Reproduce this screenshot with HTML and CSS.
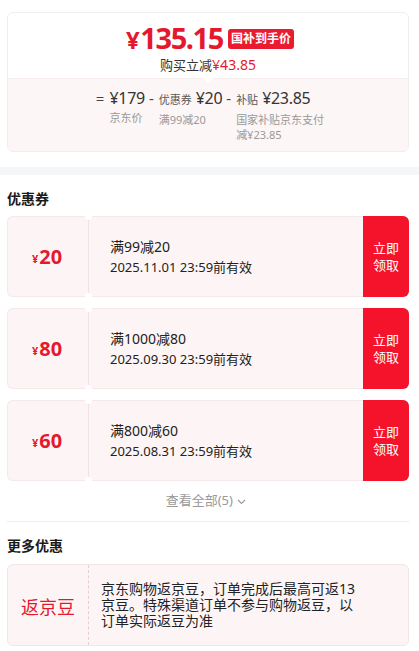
FILE: index.html
```html
<!DOCTYPE html>
<html lang="zh-CN">

<head>
    <meta charset="UTF-8">
    <meta name="viewport" content="width=device-width, initial-scale=1.0">
    <title>优惠详情</title>
    <link rel="stylesheet" href="styles.css">
</head>

<body>
    <div class="wrap">
        <div class="summary">
            <div class="summary-top">
                <div class="price-row">
                    <span class="price"><span class="yen">¥</span>135.15</span>
                    <span class="badge">国补到手价</span>
                </div>
                <div class="save">购买立减<span class="save-num">¥43.85</span></div>
            </div>
            <div class="summary-bottom">
                <span class="op">=</span>
                <div class="part">
                    <div class="part-main">¥179</div>
                    <div class="part-note">京东价</div>
                </div>
                <span class="op">-</span>
                <div class="part">
                    <div class="part-main"><span class="part-label">优惠券</span>¥20</div>
                    <div class="part-note">满99减20</div>
                </div>
                <span class="op">-</span>
                <div class="part part-wide">
                    <div class="part-main"><span class="part-label">补贴</span>¥23.85</div>
                    <div class="part-note">国家补贴京东支付减¥23.85</div>
                </div>
            </div>
        </div>
    </div>

    <div class="band"></div>

    <div class="wrap">
        <h3 class="title">优惠券</h3>

        <div class="coupon">
            <div class="coupon-value"><span class="coupon-yen">¥</span>20</div>
            <div class="coupon-info">
                <div class="coupon-rule">满99减20</div>
                <div class="coupon-date">2025.11.01 23:59前有效</div>
            </div>
            <div class="coupon-btn">立即<br>领取</div>
        </div>

        <div class="coupon">
            <div class="coupon-value"><span class="coupon-yen">¥</span>80</div>
            <div class="coupon-info">
                <div class="coupon-rule">满1000减80</div>
                <div class="coupon-date">2025.09.30 23:59前有效</div>
            </div>
            <div class="coupon-btn">立即<br>领取</div>
        </div>

        <div class="coupon">
            <div class="coupon-value"><span class="coupon-yen">¥</span>60</div>
            <div class="coupon-info">
                <div class="coupon-rule">满800减60</div>
                <div class="coupon-date">2025.08.31 23:59前有效</div>
            </div>
            <div class="coupon-btn">立即<br>领取</div>
        </div>

        <div class="more">
            查看全部(5)
            <svg width="9" height="6" viewBox="0 0 9 6" fill="none" stroke="#999" stroke-width="1.1">
                <path d="M1 1L4.5 4.5L8 1" />
            </svg>
        </div>

        <div class="divider"></div>

        <h3 class="title title-more">更多优惠</h3>

        <div class="bean">
            <div class="bean-name">返京豆</div>
            <div class="bean-text">京东购物返京豆，订单完成后最高可返13京豆。特殊渠道订单不参与购物返豆，以订单实际返豆为准</div>
        </div>
    </div>
</body>

</html>
```

FILE: styles.css
```css
body {
    margin: 0;
    padding: 0;
    background: #fff;
    color: #222;
    font-family: "Noto Sans", "Noto Sans CJK SC", sans-serif;
}

.wrap {
    padding: 0 10px 0 7px;
}

/* top price card */
.summary {
    margin-top: 12px;
    border: 1px solid #eee;
    border-radius: 6px;
    overflow: hidden;
}

.summary-top {
    height: 65px;
    display: flex;
    flex-direction: column;
    align-items: center;
    position: relative;
}

.summary-top::after {
    content: "";
    position: absolute;
    left: 50%;
    bottom: -5px;
    margin-left: -5px;
    border: 5px solid transparent;
    border-top-color: #fff;
    border-bottom: 0;
    z-index: 1;
}

.price-row {
    display: flex;
    align-items: center;
    margin-top: 9px;
    height: 34px;
    padding-left: 4px;
}

.price {
    color: #e5192e;
    font-size: 29px;
    font-weight: 700;
    letter-spacing: -1.4px;
    line-height: 34px;
}

.price .yen {
    font-size: 24px;
    margin-right: 2px;
}

.badge {
    margin-left: 5px;
    background: #ea1a2f;
    color: #fff;
    font-size: 12px;
    font-weight: 700;
    line-height: 20px;
    padding: 0 3px;
    border-radius: 3px;
}

.save {
    font-size: 13px;
    line-height: 18px;
    color: #333;
}

.save-num {
    color: #e5192e;
    font-size: 14px;
}

.summary-bottom {
    background: #fdf6f6;
    border-top: 1px solid #f6eded;
    height: 73px;
    box-sizing: border-box;
    padding-top: 8px;
    display: flex;
    justify-content: center;
    align-items: flex-start;
}

.op {
    font-size: 15px;
    line-height: 22px;
    color: #444;
    margin: 0 5px 0 4px;
}

.part-main {
    font-size: 16px;
    line-height: 22px;
    color: #333;
    white-space: nowrap;
    letter-spacing: -0.3px;
}

.part-label {
    font-size: 11px;
    color: #555;
    margin-right: 4px;
    letter-spacing: 0;
}

.part-note {
    font-size: 11px;
    line-height: 15px;
    color: #999;
    margin-top: 1px;
}

.part-wide {
    width: 88px;
}

.band {
    height: 8px;
    margin-top: 15px;
    background: #f5f6f8;
}

/* coupons */
.title {
    margin: 0;
    padding-top: 14px;
    font-size: 14px;
    line-height: 20px;
    font-weight: 700;
    color: #1a1a1a;
}

.coupon {
    margin-top: 7px;
    height: 81px;
    display: flex;
    background: #fdf5f5;
    border: 1px solid #f4e8e8;
    border-right: 0;
    border-radius: 6px;
    box-sizing: border-box;
}

.coupon + .coupon {
    margin-top: 11px;
}

.coupon-value {
    width: 81px;
    flex: none;
    border-right: 1px solid #f1e3e3;
    position: relative;
    display: flex;
    align-items: center;
    justify-content: center;
    color: #e5192e;
    font-size: 20px;
    font-weight: 700;
    padding-right: 2px;
    box-sizing: border-box;
}

.coupon-value::before,
.coupon-value::after {
    content: "";
    position: absolute;
    right: -4px;
    width: 7px;
    height: 7px;
    border-radius: 50%;
    background: #fff;
}

.coupon-value::before {
    top: -4px;
}

.coupon-value::after {
    bottom: -4px;
}

.coupon-yen {
    font-size: 11px;
    margin-top: 3px;
    margin-right: 1px;
}

.coupon-info {
    flex: 1;
    padding: 19px 0 0 21px;
}

.coupon-rule {
    font-size: 14px;
    line-height: 21px;
    color: #222;
}

.coupon-date {
    font-size: 13px;
    line-height: 21px;
    color: #222;
}

.coupon-btn {
    width: 46px;
    flex: none;
    margin: -1px 0;
    background: #f5132c;
    color: #fff;
    border-radius: 0 6px 6px 0;
    font-size: 13px;
    line-height: 17px;
    display: flex;
    align-items: center;
    justify-content: center;
    text-align: center;
}

.more {
    margin-top: 9px;
    font-size: 13px;
    line-height: 20px;
    color: #999;
    text-align: center;
    padding-right: 4px;
}

.more svg {
    vertical-align: middle;
    margin-left: 1px;
}

.divider {
    margin-top: 11px;
    height: 1px;
    background: #eee;
}

.title-more {
    padding-top: 14px;
}

/* jd beans */
.bean {
    margin-top: 8px;
    height: 82px;
    display: flex;
    background: #fdf5f5;
    border: 1px solid #f1e5e5;
    border-radius: 6px;
    box-sizing: border-box;
}

.bean-name {
    width: 81px;
    flex: none;
    border-right: 1px dashed #e6cfcf;
    display: flex;
    align-items: center;
    justify-content: center;
    color: #e5192e;
    font-size: 18px;
    padding-top: 2px;
    box-sizing: border-box;
}

.bean-text {
    width: 264px;
    margin-left: 12px;
    align-self: center;
    font-size: 14px;
    line-height: 16px;
    color: #222;
}
```
